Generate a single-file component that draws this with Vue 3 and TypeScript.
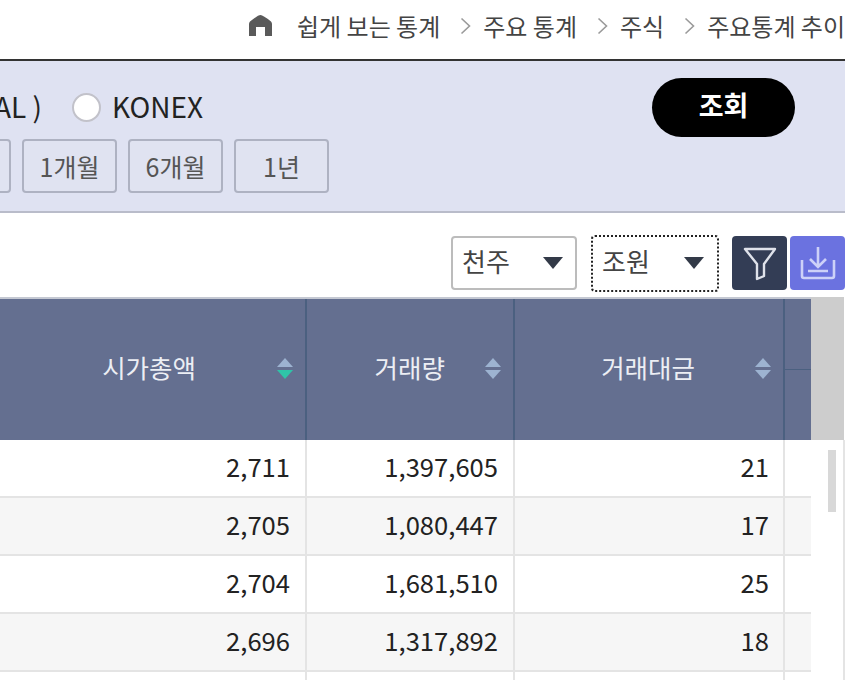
<script setup lang="ts">
const crumbs = ['주요 통계', '주식', '주요통계 추이']
const periods = ['', '1개월', '6개월', '1년']
const columns = [
  { name: '시가총액', active: true },
  { name: '거래량', active: false },
  { name: '거래대금', active: false },
]
const rows = [
  ['2,711', '1,397,605', '21'],
  ['2,705', '1,080,447', '17'],
  ['2,704', '1,681,510', '25'],
  ['2,696', '1,317,892', '18'],
  ['', '', ''],
]
</script>

<template>
  <main class="page">
    <nav class="crumbs">
      <svg class="home" width="23" height="21" viewBox="0 0 23 21">
        <path d="M11.5 0 Q14 0 22 6.5 Q23 7.5 23 9 V21 H16 V12 H7 V21 H0 V9 Q0 7.5 1 6.5 Q9 0 11.5 0 Z" fill="#5a5a5a" />
      </svg>
      <span class="first">쉽게 보는 통계</span>
      <template v-for="c in crumbs" :key="c">
        <svg class="chev" width="11" height="18" viewBox="0 0 11 18">
          <path d="M1.5 1.5 L9.5 9 L1.5 16.5" fill="none" stroke="#9a9a9a" stroke-width="1.6" />
        </svg>
        <span>{{ c }}</span>
      </template>
    </nav>

    <section class="panel">
      <div class="panel-left">
        <div class="market">
          <span class="cut">AL )</span>
          <i class="radio"></i>
          <span>KONEX</span>
        </div>
        <div class="periods">
          <button v-for="p in periods" :key="p" class="period">{{ p }}</button>
        </div>
      </div>
      <button class="search">조회</button>
    </section>

    <div class="tools">
      <div class="select">천주<i class="caret"></i></div>
      <div class="select focus">조원<i class="caret"></i></div>
      <button class="icon-btn filter">
        <svg width="34" height="38" viewBox="0 0 34 38">
          <path d="M2 5 H32 L21 20 V32 L14 35 V20 Z" fill="none" stroke="#dfe2ea" stroke-width="2.4" stroke-linejoin="round" />
        </svg>
      </button>
      <button class="icon-btn down">
        <svg width="38" height="36" viewBox="0 0 38 36">
          <path d="M19 2 V21 M11 14 L19 22 L27 14" fill="none" stroke="#cdd1f8" stroke-width="2.6" />
          <path d="M3 15 V31 Q3 33 5 33 H33 Q35 33 35 31 V15 M9 26 H29" fill="none" stroke="#cdd1f8" stroke-width="2.6" />
        </svg>
      </button>
    </div>

    <div class="table-wrap">
      <div class="table">
        <div class="head">
          <div v-for="col in columns" :key="col.name" class="th">
            <span class="th-name">{{ col.name }}</span>
            <span class="sort">
              <i class="up"></i>
              <i class="dn" :class="{ on: col.active }"></i>
            </span>
          </div>
          <div class="th-end"><div></div><div></div></div>
        </div>
        <div v-for="(r, i) in rows" :key="i" class="row">
          <div v-for="(v, j) in r" :key="j" class="td">{{ v }}</div>
          <div class="td"></div>
        </div>
      </div>
      <div class="scroll">
        <div class="scroll-head"></div>
        <div class="track"><div class="thumb"></div></div>
      </div>
    </div>
  </main>
</template>

<style>
html, body { margin: 0; background: #fff; overflow: hidden; }
</style>

<style scoped>
.page {
  width: 845px;
  height: 680px;
  overflow: hidden;
  font-family: "Noto Sans CJK KR", "Noto Sans", sans-serif;
  color: #222;
}
button { font-family: inherit; cursor: pointer; }

.crumbs {
  height: 59px;
  display: flex;
  align-items: center;
  justify-content: flex-end;
  padding-bottom: 9px;
  box-sizing: border-box;
  font-size: 24px;
  color: #444;
  white-space: nowrap;
}
.home { margin-right: 25px; }
.chev { margin: 2px 12px 0 20px; }

.panel {
  height: 154px;
  box-sizing: border-box;
  background: #dfe2f2;
  border-top: 2px solid #333;
  border-bottom: 2px solid #b9bcca;
  display: flex;
  justify-content: space-between;
  padding-right: 50px;
}
.panel-left {
  display: flex;
  flex-direction: column;
  align-items: flex-start;
  margin-left: -84px;
}
.market {
  height: 78px;
  display: flex;
  align-items: center;
  font-size: 28px;
  color: #222;
  padding-top: 14px;
  box-sizing: border-box;
}
.market span { margin-top: -3px; }
.cut { margin-left: 78px; width: 78px; }
.radio {
  width: 29px;
  height: 29px;
  box-sizing: border-box;
  border-radius: 50%;
  background: #fff;
  border: 2px solid #c2c2ca;
  margin: 0 11px 0 0;
}
.periods { display: flex; gap: 11px; }
.period {
  width: 95px;
  height: 54px;
  box-sizing: border-box;
  background: #e0e3f1;
  border: 2px solid #aeb2c2;
  border-radius: 4px;
  font-size: 25px;
  color: #555;
  padding: 0;
}
.search {
  width: 143px;
  height: 59px;
  margin-top: 17px;
  border: 0;
  border-radius: 30px;
  background: #000;
  color: #fff;
  font-size: 27px;
  font-weight: 700;
  padding: 0 0 6px;
}

.tools {
  height: 84px;
  box-sizing: border-box;
  padding-top: 16px;
  display: flex;
  align-items: center;
  justify-content: flex-end;
}
.select {
  width: 126px;
  height: 54px;
  box-sizing: border-box;
  border: 2px solid #bcbcbc;
  border-radius: 4px;
  display: flex;
  align-items: center;
  justify-content: space-between;
  padding: 0 12px 6px 9px;
  font-size: 26px;
  color: #444;
  margin-right: 14px;
  background: #fff;
}
.select.focus {
  width: 128px;
  height: 57px;
  border: 2px dotted #222;
  margin-right: 13px;
  padding-right: 13px;
}
.caret {
  width: 0;
  height: 0;
  margin-top: 6px;
  border-left: 10px solid transparent;
  border-right: 10px solid transparent;
  border-top: 12px solid #333a48;
}
.icon-btn {
  width: 55px;
  height: 54px;
  border: 0;
  border-radius: 4px;
  padding: 0;
  display: flex;
  align-items: center;
  justify-content: center;
}
.filter { background: #333d55; margin-right: 3px; }
.down { background: #6b72e0; }

.table-wrap { display: flex; }
.table { width: 811px; }
.head {
  height: 143px;
  box-sizing: border-box;
  border-top: 2px solid #c4c8d2;
  background: #646f90;
  display: grid;
  grid-template-columns: 307px 208px 270px 26px;
  color: #eceef4;
  font-size: 25.5px;
}
.th {
  display: flex;
  align-items: center;
  justify-content: flex-end;
  gap: 81px;
  padding-right: 12px;
  border-right: 2px solid #4b6080;
  box-sizing: border-box;
}
.th-name { margin-top: -6px; }
.th:nth-child(2) { gap: 40px; }
.th:nth-child(3) { gap: 60px; }
.th-end { display: flex; flex-direction: column; }
.th-end div { flex: 1; }
.th-end div:first-child { border-bottom: 1px solid #4b6080; margin-top: -1px; }
.sort { display: flex; flex-direction: column; gap: 3px; margin-top: -2px; }
.sort i {
  width: 0;
  height: 0;
  border-left: 8px solid transparent;
  border-right: 8px solid transparent;
}
.up { border-bottom: 9px solid #9db3d1; }
.dn { border-top: 9px solid #9db3d1; }
.dn.on { border-top-color: #2fc4a8; }

.row {
  height: 58px;
  box-sizing: border-box;
  border-bottom: 2px solid #e4e4e4;
  display: grid;
  grid-template-columns: 307px 208px 270px 26px;
}
.row:nth-child(odd) { background: #f6f6f6; }
.td {
  display: flex;
  align-items: center;
  justify-content: flex-end;
  padding: 0 15px 6px 0;
  border-right: 2px solid #e4e4e4;
  box-sizing: border-box;
  font-size: 25.6px;
  color: #222;
}
.td:nth-child(3) { padding-right: 14px; }
.td:last-child { border-right: 0; }

.scroll { width: 34px; }
.scroll-head { height: 143px; background: #cdcdcd; margin-right: 1px; }
.track {
  height: 300px;
  box-sizing: border-box;
  border-right: 2px solid #e4e4e4;
  padding: 10px 0 0 17px;
}
.thumb { width: 8px; height: 62px; background: #d8d8d8; }
</style>
